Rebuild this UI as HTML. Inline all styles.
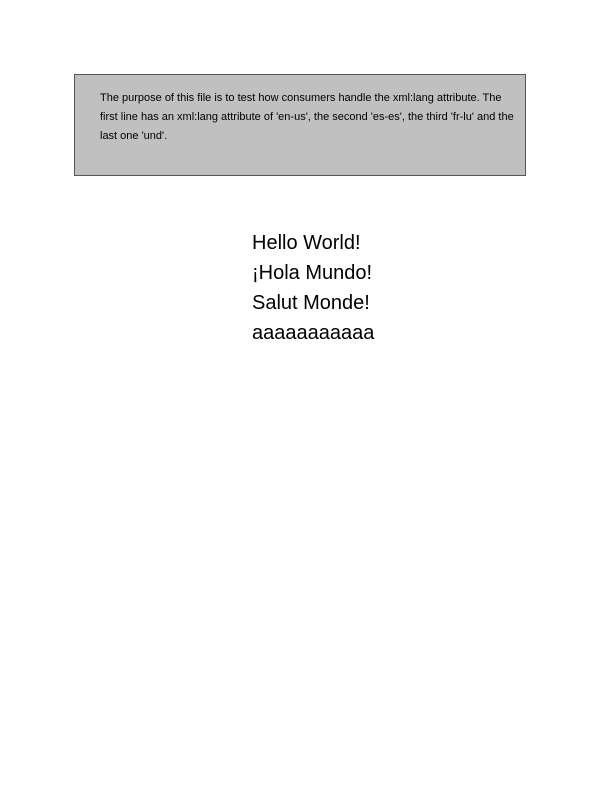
<!DOCTYPE html>
<html><head><style>
body{margin:0;width:600px;height:800px;background:#fff;font-family:"Liberation Sans",Arial,sans-serif;position:relative}
.box{position:absolute;left:74px;top:74px;width:450px;height:100px;background:#c0c0c0;border:1px solid #555}
.box p{position:absolute;left:25px;top:14px;width:420px;margin:0;font-size:11px;line-height:19px;color:#000}
.big{position:absolute;left:252px;top:228px;font-size:20px;line-height:30px;color:#000}
</style></head><body>
<div class="box"><p>The purpose of this file is to test how consumers handle the xml:lang attribute. The first line has an xml:lang attribute of 'en-us', the second 'es-es', the third 'fr-lu' and the last one 'und'.</p></div>
<div class="big">Hello World!<br>¡Hola Mundo!<br>Salut Monde!<br>aaaaaaaaaaa</div>
</body></html>
